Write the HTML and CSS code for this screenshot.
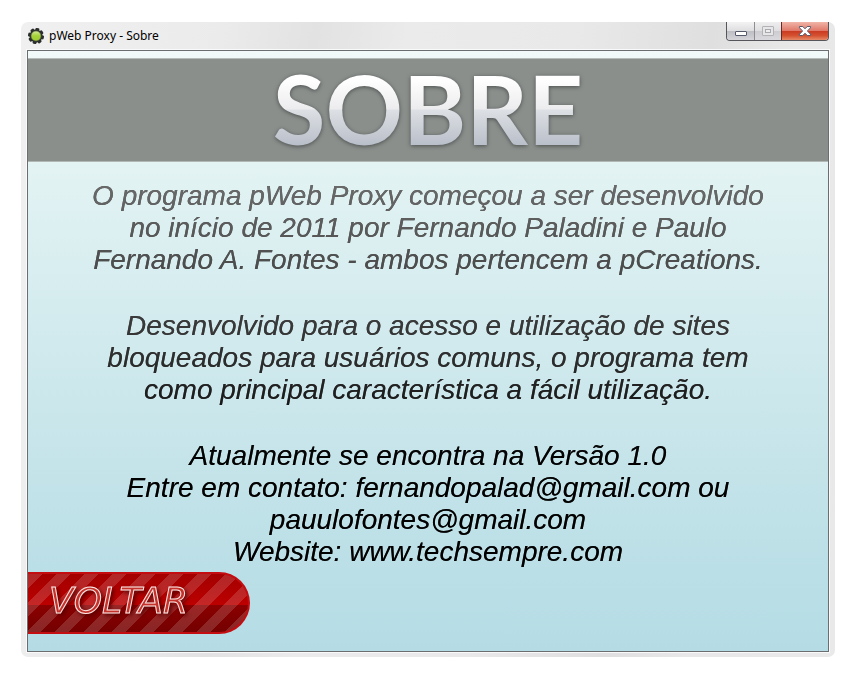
FILE: index.html
```html
<!DOCTYPE html>
<html lang="pt-BR">
<head>
<meta charset="utf-8">
<title>pWeb Proxy - Sobre</title>
<link rel="stylesheet" href="styles.css">
</head>
<body>
<div class="window">
  <header class="titlebar">
    <svg class="app-icon" viewBox="0 0 16 16" aria-hidden="true">
      <defs>
        <linearGradient id="green" x1="0" y1="0" x2="0" y2="1">
          <stop offset="0" stop-color="#d3ea98"/><stop offset=".5" stop-color="#a5d038"/><stop offset="1" stop-color="#9ccb33"/>
        </linearGradient>
      </defs>
      <g fill="#2b2d2d" transform="rotate(12 8 8)">
        <circle cx="8" cy="8" r="6.500"/>
        <g id="teeth"><rect x="6" y="0" width="4" height="16" rx="1.2"/><rect x="0" y="6" width="16" height="4" rx="1.2"/></g>
        <use href="#teeth" transform="rotate(45 8 8)"/>
      </g>
      <circle cx="8" cy="8" r="5" fill="url(#green)" stroke="#55613a" stroke-width=".6"/>
    </svg>
    <span class="window-title">pWeb Proxy - Sobre</span>
    <div class="controls">
      <button class="control minimize" type="button" aria-label="Minimizar">
        <svg viewBox="0 0 14 12"><rect x="1.5" y="6.5" width="11" height="4" rx=".5" fill="#fff" stroke="#555a6b"/></svg>
      </button>
      <button class="control maximize" type="button" aria-label="Maximizar" disabled>
        <svg viewBox="0 0 14 12"><rect x="1.5" y="1.5" width="11" height="9" rx=".5" fill="#e6e6e8" stroke="#b3b3b6"/><rect x="4.5" y="4.5" width="5" height="3" fill="#eee" stroke="#a9a9ad"/></svg>
      </button>
      <button class="control close" type="button" aria-label="Fechar">
        <svg viewBox="0 0 14 12"><path d="M1.500 1.500h3.300L7 3.800l2.200-2.300h3.300v1.300L9.400 6l3.100 3.200v1.300H9.200L7 8.200l-2.200 2.300H1.500V9.200L4.600 6 1.500 2.800z" fill="#fff" stroke="#555a6b"/></svg>
      </button>
    </div>
  </header>
  <main class="content">
    <div class="banner"><h1 class="heading">SOBRE</h1></div>
    <div class="about">
      <p>O programa pWeb Proxy começou a ser desenvolvido<br>no início de 2011 por Fernando Paladini e Paulo<br>Fernando A. Fontes - ambos pertencem a pCreations.</p>
      <p>Desenvolvido para o acesso e utilização de sites<br>bloqueados para usuários comuns, o programa tem<br>como principal característica a fácil utilização.</p>
      <p>Atualmente se encontra na Versão 1.0<br>Entre em contato: fernandopalad@gmail.com ou<br>pauulofontes@gmail.com<br>Website: www.techsempre.com</p>
    </div>
    <button class="back" type="button"><span>VOLTAR</span></button>
  </main>
</div>
</body>
</html>
```

FILE: styles.css
```css
* { box-sizing: border-box; }

body {
  margin: 0;
  padding: 22px 29px 31px 21px;
  background: #fff;
  font-family: "Liberation Sans", Arial, sans-serif;
}

.window {
  padding: 0 6px 5px 6px;
  border-radius: 7px;
  background: linear-gradient(100deg, #f0f0f0 0%, #ebebeb 22%, #e2e2e2 32%, #ebebeb 42%, #e9e9e9 60%, #dfdfdf 75%, #e8e8e8 84%, #e9e9e9 100%);
}

.titlebar {
  display: flex;
  align-items: flex-start;
  height: 28px;
}

.app-icon {
  width: 16px;
  height: 16px;
  margin: 6px 5px 0 1px;
}

.window-title {
  flex: 1;
  font: 12px/16px "Noto Sans", "Segoe UI", sans-serif;
  margin-top: 6px;
  color: #000;
}

.controls {
  display: flex;
  height: 19px;
  border: 1px solid #55565b;
  border-top: 0;
  border-radius: 0 0 4px 4px;
  overflow: hidden;
}

.control {
  display: flex;
  align-items: center;
  justify-content: center;
  width: 28px;
  padding: 0;
  border: 0;
  border-right: 1px solid #8d8d92;
  background: linear-gradient(#f3f3f4, #dedee0 50%, #bdbec4 51%, #d4d4d9);
}

.control svg {
  width: 14px;
  height: 12px;
}

.maximize {
  width: 27px;
  border-right-color: #6d2a22;
  background: linear-gradient(#eeeeef, #dfdfe1 50%, #cdcdd1 51%, #dadade);
}

.close {
  width: 46px;
  border: 0;
  background: linear-gradient(#f0b5a7, #e0796a 48%, #c93a22 50%, #d4502f 75%, #e58a68);
}

.content {
  padding-top: 7px;
  padding-bottom: 17px;
  border: 1px solid #6b6e70;
  outline: 1px solid #fafafa;
  background: linear-gradient(#f1f9f9 0, #e3f3f3 115px, #bfe1e8 470px, #b5dce5 100%);
}

.banner {
  display: flex;
  justify-content: center;
  height: 104px;
  border-top: 1px solid #b4bbb8;
  border-bottom: 1px solid #b0b7b5;
  background: #8a8f8c;
}

.heading {
  margin: 0;
  font: 700 96px/98px Lato, sans-serif;
  color: transparent;
  background: linear-gradient(#fff 20px, #ececee 50px, #dde0e4 51px, #b7bdc8 88px);
  background-clip: text;
  filter: drop-shadow(0 1px 2px #4b4f4d);
}

.about {
  padding-top: 18px;
  font-style: italic;
  font-size: 28px;
  line-height: 32px;
  text-align: center;
  color: transparent;
  background: linear-gradient(#6b6b6b 20px, #4a4a4a 110px, #2c2c2c 200px, #000 300px);
  background-clip: text;
  filter: drop-shadow(0 0 0 #222c);
}

.about p { margin: 0 0 34px; }
.about p:last-child { margin: 0; }

.back {
  display: block;
  width: 222px;
  height: 62px;
  margin-top: 4px;
  padding: 0 0 4px 21px;
  border: 2px solid #c40d10;
  border-left: 0;
  border-radius: 0 31px 31px 0;
  text-align: left;
  background:
    repeating-linear-gradient(135deg, #ffffff26 0 10px, #ffffff00 10px 20px),
    linear-gradient(#a30000, #bc0000 53%, #8b0000 54%, #740000);
}

.back span {
  font: italic 36px/40px "DejaVu Sans", sans-serif;
  color: #c4302a;
  -webkit-text-stroke: 1px #ffe9e6;
  filter: drop-shadow(2px 2px 2px #5a0000);
}
```
